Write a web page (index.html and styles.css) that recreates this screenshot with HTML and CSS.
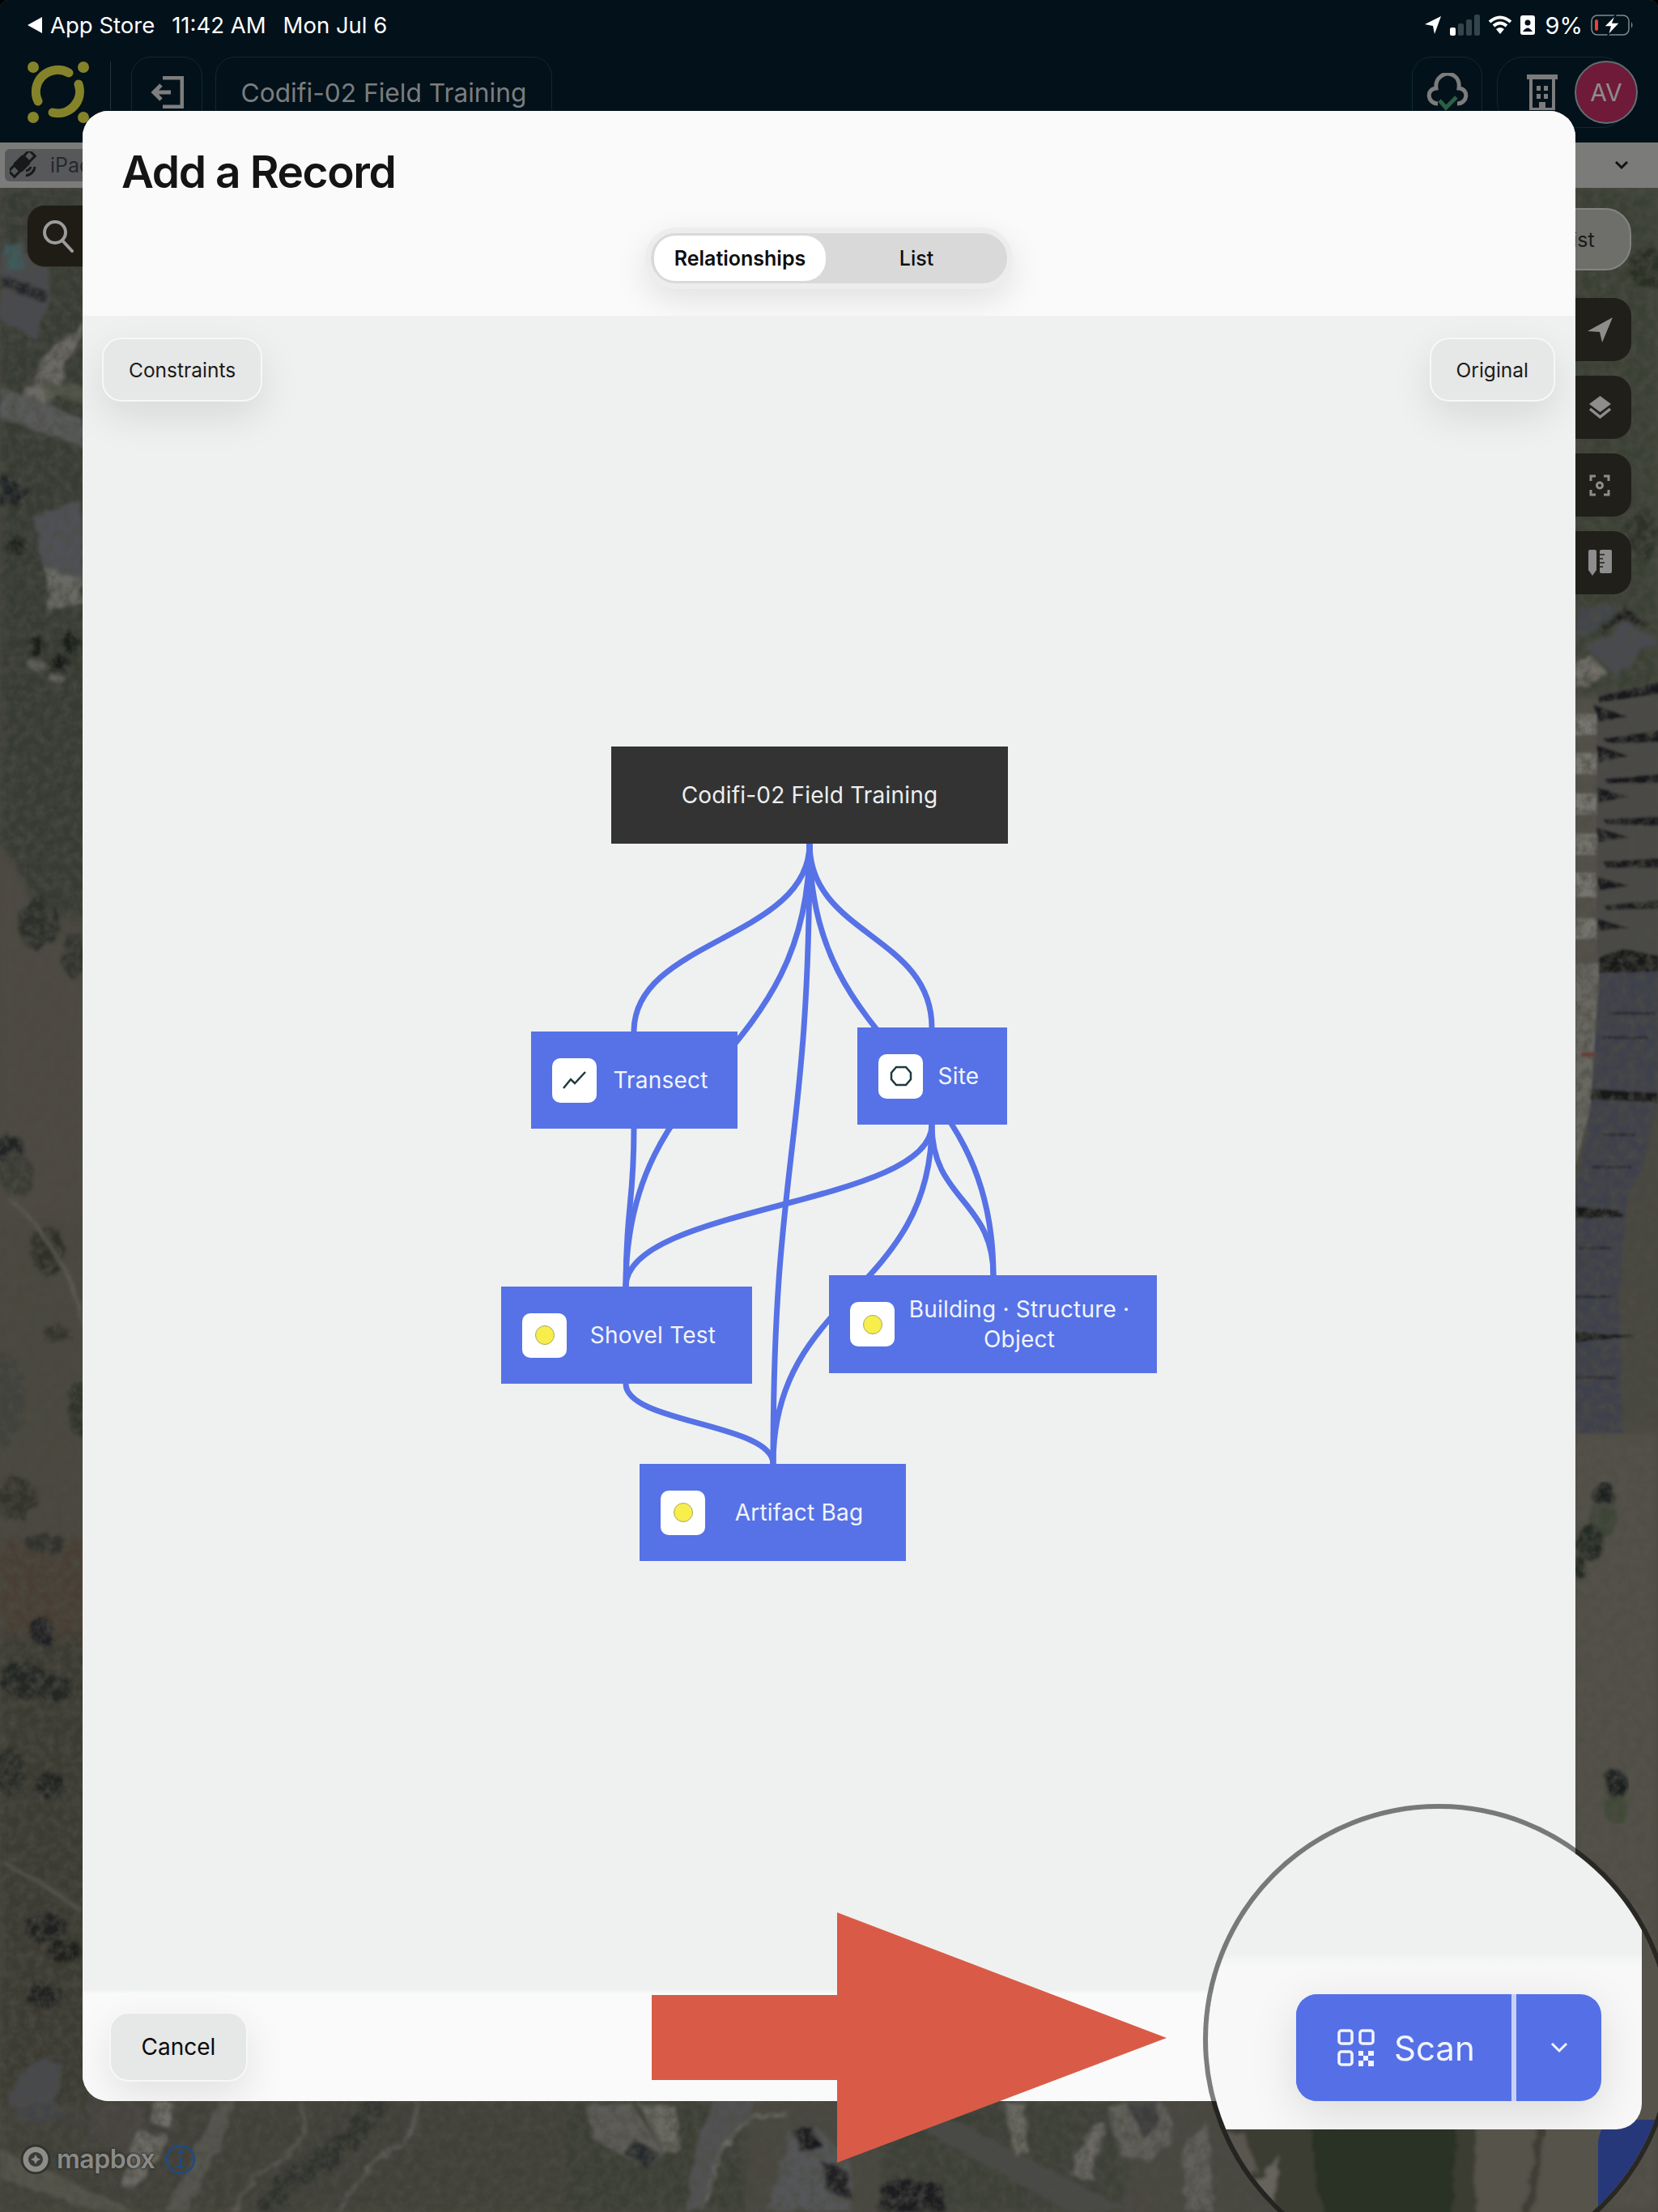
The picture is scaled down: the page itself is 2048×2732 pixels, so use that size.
FILE: index.html
```html
<!DOCTYPE html>
<html lang="en">

<head>
    <meta charset="UTF-8">
    <meta name="viewport" content="width=device-width, initial-scale=1.0">
    <title>Add a Record</title>
    <link rel="stylesheet" href="styles.css">
</head>

<body>
    <div class="screen">

        <!-- satellite map, only the edges around the dialog show -->
        <svg class="map" viewBox="0 0 2048 2732" aria-hidden="true">
            <defs>
                <filter id="soft"><feGaussianBlur stdDeviation="1.6" /></filter>
                <filter id="softer"><feGaussianBlur stdDeviation="6" /></filter>
                <filter id="sat" x="0" y="0" width="100%" height="100%">
                    <feTurbulence type="fractalNoise" baseFrequency="0.05" numOctaves="3" seed="4" result="n" />
                    <feDisplacementMap in="SourceGraphic" in2="n" scale="16" result="d" />
                    <feGaussianBlur in="d" stdDeviation="2.2" />
                </filter>
                <filter id="grain" x="0" y="0" width="100%" height="100%">
                    <feTurbulence type="fractalNoise" baseFrequency="0.09" numOctaves="4" seed="9" />
                    <feColorMatrix values="0 0 0 0 0.1  0 0 0 0 0.1  0 0 0 0 0.08  1.4 0 0 0 -0.45" />
                </filter>
            </defs>
            <rect width="2048" height="2732" fill="#55534a" />
            <g filter="url(#softer)">
                <rect x="0" y="232" width="110" height="900" fill="#40453a" />
                <polygon points="0,1040 110,1230 110,1500 0,1500" fill="#5a564d" />
                <rect x="0" y="1500" width="110" height="400" fill="#565249" />
                <rect x="0" y="1900" width="110" height="120" fill="#544a3e" />
                <rect x="0" y="2020" width="110" height="600" fill="#45443b" />
                <rect x="1940" y="232" width="108" height="640" fill="#454b3e" />
                <rect x="1940" y="1770" width="108" height="960" fill="#625e55" />
                <rect x="1940" y="860" width="108" height="340" fill="#625f57" />
                <rect x="0" y="2595" width="700" height="137" fill="#4c4c42" />
                <rect x="700" y="2595" width="220" height="137" fill="#44493e" />
                <rect x="1090" y="2595" width="300" height="137" fill="#474c40" />
            </g>
            <g filter="url(#sat)">
                <!-- left strip, top houses and street -->
                <polygon points="0,315 60,305 62,372 45,420 0,395" fill="#54575d" />
                <polygon points="8,305 28,298 28,330 8,335" fill="#4a6a6c" />
                <polygon points="0,340 60,360 56,372 0,355" fill="#2c2e32" />
                <polygon points="30,490 62,425 95,410 102,395 102,410 60,500" fill="#7e7c75" />
                <polygon points="0,479 102,517 102,551 0,517" fill="#686a6b" />
                <polygon points="55,470 102,478 102,497 54,482" fill="#5f6654" />
                <polygon points="0,585 36,605 25,625 0,625" fill="#24262c" />
                <polygon points="42,640 102,620 102,715 62,720 48,680" fill="#5b5f66" />
                <polygon points="55,700 102,715 102,745 62,760" fill="#7c7b75" />
                <ellipse cx="20" cy="675" rx="11" ry="14" fill="#272c24" />
                <ellipse cx="47" cy="800" rx="9" ry="13" fill="#1f211e" />
                <ellipse cx="72" cy="820" rx="11" ry="13" fill="#1f211e" />
                <ellipse cx="87" cy="795" rx="9" ry="12" fill="#1f211e" />
                <ellipse cx="46" cy="822" rx="11" ry="6" fill="#74746c" />
                <ellipse cx="70" cy="838" rx="11" ry="5" fill="#74746c" />
                <ellipse cx="48" cy="1140" rx="24" ry="34" fill="#363830" />
                <ellipse cx="92" cy="1180" rx="14" ry="30" fill="#3a3c35" />
                <ellipse cx="12" cy="1420" rx="20" ry="16" fill="#26292a" />
                <ellipse cx="20" cy="1450" rx="22" ry="26" fill="#45463e" />
                <ellipse cx="60" cy="1545" rx="20" ry="30" fill="#38392f" />
                <ellipse cx="70" cy="1648" rx="18" ry="10" fill="#3c3d36" />
                <ellipse cx="5" cy="1730" rx="26" ry="56" fill="#4b4e45" />
                <ellipse cx="98" cy="1740" rx="12" ry="36" fill="#383d32" />
                <path d="M10 1480 Q50 1510 80 1570 Q95 1600 102 1635" fill="none" stroke="#6f6c63" stroke-width="4" />
                <!-- left strip, trees and lower house -->
                <ellipse cx="20" cy="1850" rx="26" ry="26" fill="#3c3c36" />
                <ellipse cx="55" cy="1905" rx="25" ry="12" fill="#3a3a34" />
                <ellipse cx="52" cy="2015" rx="16" ry="16" fill="#26272a" />
                <ellipse cx="30" cy="2075" rx="30" ry="20" fill="#2b2d29" />
                <ellipse cx="68" cy="2085" rx="24" ry="16" fill="#2c2e29" />
                <ellipse cx="12" cy="2190" rx="20" ry="28" fill="#33352e" />
                <ellipse cx="62" cy="2205" rx="20" ry="16" fill="#272926" />
                <ellipse cx="55" cy="2380" rx="26" ry="18" fill="#262826" />
                <ellipse cx="80" cy="2410" rx="20" ry="16" fill="#252723" />
                <ellipse cx="55" cy="2465" rx="22" ry="15" fill="#262825" />
                <path d="M5 2300 Q60 2330 102 2360" fill="none" stroke="#66635a" stroke-width="5" />
                <polygon points="8,2585 50,2540 75,2545 74,2590 55,2615 12,2600" fill="#52545a" />
                <!-- bottom strip -->
                <polygon points="0,2655 0,2690 120,2732 170,2732" fill="#646459" />
                <polygon points="270,2595 295,2595 232,2732 205,2732" fill="#66665f" />
                <polygon points="112,2600 170,2595 185,2630 158,2660 110,2640" fill="#524f4b" />
                <polygon points="190,2595 212,2595 210,2630 190,2625" fill="#82827a" />
                <polygon points="170,2630 210,2640 170,2705 150,2700" fill="#7e7c74" />
                <path d="M470 2595 Q440 2640 400 2670 Q350 2690 325 2732" fill="none" stroke="#373b34" stroke-width="28" />
                <path d="M375 2600 Q385 2640 350 2665 Q310 2690 285 2732" fill="none" stroke="#6d6b62" stroke-width="4" />
                <path d="M515 2595 Q520 2640 480 2660 Q445 2680 420 2732" fill="none" stroke="#74716a" stroke-width="4" />
                <ellipse cx="50" cy="2610" rx="30" ry="12" fill="#4d4f53" />
                <polygon points="725,2600 780,2597 820,2660 800,2680 730,2640" fill="#6e6d67" />
                <polygon points="780,2640 815,2660 800,2680 770,2660" fill="#2e3034" />
                <polygon points="790,2600 835,2600 840,2655 820,2660" fill="#7d7b72" />
                <polygon points="880,2595 940,2595 890,2660 865,2732 845,2732 860,2650" fill="#606164" />
                <path d="M970 2608 Q915 2610 890 2660 Q875 2695 870 2732" fill="none" stroke="#7e7c74" stroke-width="4" />
                <polygon points="975,2630 1012,2630 1050,2670 1050,2732 950,2732" fill="#646568" />
                <polygon points="978,2632 1005,2628 1014,2650 990,2660" fill="#1c1e23" />
                <polygon points="1015,2670 1045,2680 1050,2715 1020,2705" fill="#25272c" />
                <polygon points="1090,2700 1115,2690 1165,2700 1170,2732 1085,2732" fill="#212328" />
                <polygon points="1130,2625 1170,2615 1400,2732 1320,2732" fill="#545552" />
                <polygon points="1240,2595 1265,2595 1270,2660 1252,2660" fill="#7c7a71" />
                <polygon points="1366,2600 1435,2597 1452,2625 1420,2670 1385,2665" fill="#72716b" />
                <polygon points="1395,2600 1432,2597 1430,2630 1410,2640" fill="#46474a" />
                <polygon points="1338,2640 1365,2620 1350,2690 1325,2690" fill="#7b7a73" />
                <polygon points="1460,2650 1490,2620 1500,2732 1465,2732" fill="#72716a" />
                <!-- right strip, grass and first house -->
                <ellipse cx="2035" cy="330" rx="22" ry="26" fill="#333829" />
                <ellipse cx="2030" cy="660" rx="16" ry="32" fill="#343a2e" />
                <polygon points="1946,760 1975,745 2000,750 1955,790 1946,800" fill="#4e5158" />
                <polygon points="1960,800 2010,770 2048,790 2000,835 1985,825" fill="#55575e" />
                <polygon points="1975,785 2005,748 2035,772 2000,770" fill="#202124" />
                <polygon points="1946,820 1965,810 1985,830 1946,850" fill="#85837a" />
            </g>
            <g filter="url(#soft)">
                <rect x="1946" y="882" width="26" height="26" fill="#8a8881" />
                <rect x="1946" y="930" width="28" height="26" fill="#8a8881" />
                <rect x="1946" y="980" width="28" height="26" fill="#8a8881" />
                <rect x="1946" y="1030" width="27" height="26" fill="#8a8881" />
                <rect x="1946" y="1078" width="26" height="30" fill="#8a8881" />
                <rect x="1946" y="1134" width="26" height="26" fill="#8a8881" />
                <polygon points="1972,868 2048,850 2048,1180 1972,1180" fill="#565552" />
                <polygon points="1975,860 2050,843 2050,857 1975,868" fill="#1c1d21" />
                <polygon points="1968,870 2010,885 1975,892" fill="#1e1f23" />
                <polygon points="1980,912 2050,902 2050,917 1985,918" fill="#1c1d21" />
                <polygon points="1972,920 2012,934 1975,942" fill="#1e1f23" />
                <polygon points="1982,962 2050,956 2050,967 1985,968" fill="#1c1d21" />
                <polygon points="1972,972 2012,984 1975,992" fill="#1e1f23" />
                <polygon points="1980,1012 2050,1008 2050,1020 1985,1018" fill="#1c1d21" />
                <polygon points="1972,1022 2012,1034 1975,1040" fill="#1e1f23" />
                <polygon points="1980,1064 2050,1060 2050,1072 1985,1072" fill="#1c1d21" />
                <polygon points="1972,1082 2012,1094 1975,1100" fill="#1e1f23" />
                <polygon points="1980,1118 2050,1112 2050,1122 1985,1124" fill="#1c1d21" />
                <polygon points="1972,1134 2012,1146 1975,1150" fill="#1e1f23" />
                <polygon points="1946,1190 1976,1190 1972,1340 1946,1440" fill="#7a7972" />
                <polygon points="1976,1190 2048,1190 2048,1355 2030,1440 2010,1480 2000,1600 2005,1770 1946,1770 1946,1480 1965,1360" fill="#484c58" />
                <polygon points="1975,1182 2005,1172 2048,1180 2048,1200 1975,1202" fill="#1a1b1e" />
                <polygon points="1966,1345 2048,1350 2048,1362 1964,1358" fill="#1c1c1f" />
                <polygon points="1946,1490 2000,1495 2006,1503 1946,1505" fill="#1b1c1f" />
                <polygon points="1946,1645 2020,1650 1946,1658" fill="#1b1c1f" />
                <rect x="1985" y="1250" width="60" height="3" fill="#2a2b31" />
                <rect x="1980" y="1280" width="55" height="3" fill="#2a2b31" />
                <rect x="1980" y="1400" width="40" height="3" fill="#2a2b31" />
                <rect x="1965" y="1440" width="50" height="3" fill="#2a2b31" />
                <rect x="1950" y="1540" width="40" height="3" fill="#2a2b31" />
                <rect x="1946" y="1600" width="45" height="3" fill="#2a2b31" />
                <rect x="1946" y="1700" width="50" height="3" fill="#2a2b31" />
                <rect x="1953" y="1300" width="18" height="5" fill="#8a3a32" />
            </g>
            <g filter="url(#sat)">
                <ellipse cx="1980" cy="1845" rx="14" ry="15" fill="#1f2122" />
                <ellipse cx="1980" cy="1875" rx="18" ry="20" fill="#465140" />
                <ellipse cx="1965" cy="1905" rx="16" ry="22" fill="#2c3229" />
                <ellipse cx="1950" cy="1935" rx="8" ry="14" fill="#2c3229" />
                <ellipse cx="1997" cy="2205" rx="14" ry="18" fill="#1f2122" />
                <ellipse cx="1997" cy="2235" rx="15" ry="18" fill="#4c563f" />
            </g>
            <rect width="2048" height="2732" filter="url(#grain)" />
            <rect width="2048" height="2732" fill="#000" opacity="0.14" />
        </svg>

        <div class="status-bar">
            <div class="status-left">
                <span class="back-triangle"></span>
                <span class="status-app">App Store</span>
                <span class="status-time">11:42 AM</span>
                <span>Mon Jul 6</span>
            </div>
            <div class="status-right">
                <svg width="22" height="24" viewBox="0 0 22 24"><path d="M21 1 L1 11 L11 13 L13 23 Z" fill="#fff" /></svg>
                <svg width="37" height="26" viewBox="0 0 37 26">
                    <rect x="0" y="16" width="7" height="10" rx="2" fill="#fff" />
                    <rect x="10" y="11" width="7" height="15" rx="2" fill="#33454a" />
                    <rect x="20" y="6" width="7" height="20" rx="2" fill="#33454a" />
                    <rect x="30" y="0" width="7" height="26" rx="2" fill="#33454a" />
                </svg>
                <svg width="30" height="24" viewBox="0 0 30 24">
                    <path d="M2 8 Q15 -3 28 8" fill="none" stroke="#fff" stroke-width="4" />
                    <path d="M7 13 Q15 6 23 13" fill="none" stroke="#fff" stroke-width="4" />
                    <path d="M15 23 L10 17 Q15 13 20 17 Z" fill="#fff" />
                </svg>
                <svg width="18" height="24" viewBox="0 0 18 24">
                    <rect width="18" height="24" rx="3" fill="#fff" />
                    <circle cx="9" cy="9" r="3.5" fill="#03111a" />
                    <path d="M3 20 Q9 11 15 20 Z" fill="#03111a" />
                </svg>
                <span class="battery-pct">9%</span>
                <svg width="54" height="26" viewBox="0 0 54 26">
                    <rect x="1" y="1" width="46" height="24" rx="7" fill="none" stroke="#7f8c8e" stroke-width="1.5" />
                    <rect x="5" y="6" width="4" height="14" rx="2" fill="#e8433a" />
                    <path d="M50 9 Q53 13 50 17 Z" fill="#7f8c8e" />
                    <path d="M31 0 L16 15 L24 15 L21 26 L36 10 L27 10 Z" fill="#fff" stroke="#03111a" stroke-width="1.5" />
                </svg>
            </div>
        </div>

        <div class="app-bar">
            <svg class="logo" width="78" height="78" viewBox="0 0 78 78">
                <g fill="#84832a">
                    <circle cx="8" cy="8" r="7" />
                    <circle cx="70" cy="8" r="7" />
                    <circle cx="8" cy="70" r="7" />
                    <circle cx="70" cy="70" r="7" />
                </g>
                <g fill="none" stroke="#84832a" stroke-width="11" stroke-linecap="round">
                    <path d="M52 15 A27 27 0 0 0 14 50" />
                    <path d="M64 29 A27 27 0 0 1 32 64" />
                </g>
            </svg>
            <div class="bar-divider"></div>
            <div class="bar-box back-box">
                <svg width="42" height="40" viewBox="0 0 42 40" fill="none" stroke="#7e7e7e" stroke-width="5">
                    <path d="M16 2 H40 V38 H16" />
                    <path d="M26 20 H6 M14 11 L5 20 L14 29" />
                </svg>
            </div>
            <div class="bar-box project-box">Codifi-02 Field Training</div>
            <div class="bar-spacer"></div>
            <div class="bar-box cloud-box">
                <svg width="52" height="48" viewBox="0 0 52 48" fill="none">
                    <path d="M14 38 C1 38 -1 20 12 19 C10 4 24 1 26 1 C30 1 42 4 40 19 C53 20 51 38 38 38" stroke="#7c7c7c" stroke-width="5" />
                    <path d="M16 34 L24 43 L37 30" stroke="#2a6044" stroke-width="5" />
                </svg>
            </div>
            <div class="bar-box org-box">
                <svg width="38" height="44" viewBox="0 0 38 44" fill="none">
                    <path d="M0 3 H38" stroke="#7c7c7c" stroke-width="6" />
                    <path d="M5 6 V43 H33 V6" stroke="#7c7c7c" stroke-width="4" />
                    <g fill="#7c7c7c">
                        <rect x="12" y="14" width="5" height="6" />
                        <rect x="21" y="14" width="5" height="6" />
                        <rect x="12" y="24" width="5" height="6" />
                        <rect x="21" y="24" width="5" height="6" />
                        <rect x="15" y="34" width="8" height="9" />
                    </g>
                </svg>
            </div>
        </div>
        <div class="avatar">AV</div>

        <div class="gps-bar">
            <div class="gps-tag">
                <svg width="34" height="34" viewBox="0 0 34 34" fill="none" stroke="#17191b" stroke-width="3">
                    <g transform="rotate(-45 15 15)">
                        <rect x="-3" y="10" width="10" height="10" />
                        <rect x="23" y="10" width="10" height="10" />
                        <rect x="9" y="9" width="12" height="12" fill="#17191b" />
                    </g>
                    <path d="M20 30 Q30 28 31 19 M20 24 Q25 23 26 19" />
                </svg>
                <span>iPad</span>
            </div>
            <svg class="gps-chevron" width="18" height="12" viewBox="0 0 18 12" fill="none" stroke="#111" stroke-width="3"><path d="M2 2 L9 9 L16 2" /></svg>
        </div>

        <!-- floating map controls, mostly behind the dialog -->
        <button class="map-search">
            <svg width="40" height="41" viewBox="0 0 40 41" fill="none" stroke="#9c9c9c" stroke-width="4">
                <circle cx="16" cy="16" r="13" />
                <path d="M25 26 L37 39" stroke-linecap="round" />
            </svg>
        </button>
        <div class="map-list">List</div>
        <div class="map-tools">
            <div class="tool"><svg width="31" height="31" viewBox="0 0 31 31"><path d="M31 0 L0 17 L15 18 L18 31 Z" fill="#8d8d8d" /></svg></div>
            <div class="tool">
                <svg width="27" height="29" viewBox="0 0 27 29">
                    <path d="M13.500 0 L27 10 L13.500 20 L0 10 Z" fill="#8d8d8d" />
                    <path d="M1 16 L13.500 26 L26 16" fill="none" stroke="#8d8d8d" stroke-width="3.500" />
                </svg>
            </div>
            <div class="tool">
                <svg width="26" height="27" viewBox="0 0 26 27" fill="none" stroke="#8d8d8d" stroke-width="3">
                    <path d="M8 2 H2 V8 M18 2 H24 V8 M8 25 H2 V19 M18 25 H24 V19" />
                    <circle cx="13" cy="13.500" r="3.500" />
                </svg>
            </div>
            <div class="tool">
                <svg width="29" height="32" viewBox="0 0 29 32">
                    <path d="M0 2 Q0 0 2 0 H8 Q10 0 10 2 V25 L5 32 L0 25 Z" fill="#8d8d8d" />
                    <rect x="14" y="0" width="15" height="29" rx="2" fill="#8d8d8d" />
                    <path d="M14 6 H20 M14 11 H18 M14 16 H20 M14 21 H18" stroke="#201f19" stroke-width="1.500" />
                </svg>
            </div>
        </div>

        <div class="mapbox">
            <svg width="38" height="38" viewBox="0 0 38 38">
                <circle cx="19" cy="19" r="17" fill="#8c8c88" stroke="#33332e" stroke-width="3" />
                <circle cx="19" cy="19" r="9" fill="#3a3a36" />
                <path d="M19 13 L21 17 L25 19 L21 21 L19 25 L17 21 L13 19 L17 17 Z" fill="#8c8c88" />
            </svg>
            <span>mapbox</span>
            <svg class="mapbox-info" width="38" height="38" viewBox="0 0 38 38" fill="none" stroke="#1c4a8a" stroke-width="2.500">
                <circle cx="19" cy="19" r="17" />
                <path d="M19 16 V28 M15 28 H23" />
                <circle cx="19" cy="10" r="1.500" fill="#1c4a8a" />
            </svg>
        </div>

        <div class="modal">
            <div class="modal-header">
                <h1 class="modal-title">Add a Record</h1>
                <div class="segmented">
                    <div class="segment segment-active">Relationships</div>
                    <div class="segment">List</div>
                </div>
            </div>

            <div class="modal-body">
                <div class="graph-actions">
                    <button class="soft-button">Constraints</button>
                    <button class="soft-button">Original</button>
                </div>

                <div class="graph">
                    <!-- viewBox keeps page coordinates for the edges -->
                    <svg class="graph-edges" viewBox="102 390 1844 2068">
                        <g fill="none" stroke="#5672e6" stroke-width="7">
                            <path d="M1000 1042 C1000 1160 783 1160 783 1274" />
                            <path d="M1000 1042 C1000 1315 773 1315 773 1589" />
                            <path d="M1000 1042 C1000 1425 955 1425 955 1808" />
                            <path d="M1000 1042 C1000 1308 1227 1308 1227 1575" />
                            <path d="M1000 1042 C1000 1155 1151 1155 1151 1269" />
                            <path d="M783 1394 C783 1490 773 1490 773 1589" />
                            <path d="M1151 1389 C1151 1489 773 1489 773 1589" />
                            <path d="M1151 1389 C1151 1482 1227 1482 1227 1575" />
                            <path d="M1151 1389 C1151 1598 955 1598 955 1808" />
                            <path d="M773 1709 C773 1758 955 1758 955 1808" />
                        </g>
                    </svg>

                    <div class="node node-root">Codifi-02 Field Training</div>

                    <div class="node node-transect">
                        <span class="node-icon">
                            <svg width="30" height="24" viewBox="0 0 30 24" fill="none" stroke="#1f3a3d" stroke-width="2.500"><path d="M1 22 L10 11 L15 16 L28 2" /></svg>
                        </span>
                        <span class="node-label">Transect</span>
                    </div>
                    <div class="node node-site">
                        <span class="node-icon">
                            <svg width="28" height="26" viewBox="0 0 28 26" fill="none" stroke="#1f3a3d" stroke-width="2.500"><path d="M8 2 H20 L26 9 V17 L20 24 H8 L2 17 V9 Z" /></svg>
                        </span>
                        <span class="node-label">Site</span>
                    </div>
                    <div class="node node-shovel">
                        <span class="node-icon"><span class="dot"></span></span>
                        <span class="node-label">Shovel Test</span>
                    </div>
                    <div class="node node-building">
                        <span class="node-icon"><span class="dot"></span></span>
                        <span class="node-label">Building · Structure · Object</span>
                    </div>
                    <div class="node node-artifact">
                        <span class="node-icon"><span class="dot"></span></span>
                        <span class="node-label">Artifact Bag</span>
                    </div>
                </div>
            </div>

            <div class="modal-footer">
                <button class="soft-button cancel-button">Cancel</button>
            </div>
        </div>

        <svg class="red-arrow" width="636" height="309" viewBox="0 0 636 309">
            <polygon points="0,102 229,102 229,0 636,155 229,309 229,207 0,207" fill="#d95b47" />
        </svg>

        <!-- enlarged view of the split button -->
        <div class="magnifier">
            <svg class="magnifier-map" viewBox="1492 2234 570 570">
                <rect x="1492" y="2234" width="570" height="570" fill="#56534a" />
                <g filter="url(#sat)">
                    <rect x="1492" y="2610" width="330" height="194" fill="#3a3d33" />
                    <polygon points="1620,2625 1800,2625 1790,2804 1640,2804" fill="#2c3028" />
                    <polygon points="1492,2630 1535,2632 1555,2680 1520,2720 1492,2700" fill="#5a5750" />
                    <polygon points="1545,2700 1580,2660 1570,2760 1540,2760" fill="#66645c" />
                    <polygon points="1900,2625 1910,2625 1880,2804 1870,2804" fill="#3e3c36" />
                </g>
                <path d="M1974 2804 V2650 Q1974 2618 2006 2618 H2062 V2804 Z" fill="#27387a" />
            </svg>
            <div class="magnifier-panel">
                <div class="magnifier-body"></div>
                <div class="magnifier-footer">
                    <div class="scan-button">
                        <div class="scan-main">
                            <svg width="46" height="46" viewBox="0 0 46 46" fill="none" stroke="#f2f4ff" stroke-width="3.500">
                                <rect x="2" y="2" width="16" height="16" rx="3" />
                                <rect x="28" y="2" width="16" height="16" rx="3" />
                                <rect x="2" y="28" width="16" height="16" rx="3" />
                                <g fill="#f2f4ff" stroke="none">
                                    <rect x="26" y="27" width="6" height="6" />
                                    <rect x="38" y="27" width="7" height="6" />
                                    <rect x="32" y="33" width="6" height="6" />
                                    <rect x="26" y="39" width="6" height="7" />
                                    <rect x="38" y="39" width="7" height="7" />
                                </g>
                            </svg>
                            <span>Scan</span>
                        </div>
                        <div class="scan-more">
                            <svg width="22" height="14" viewBox="0 0 22 14" fill="none" stroke="#f2f4ff" stroke-width="3"><path d="M2 2 L11 11 L20 2" /></svg>
                        </div>
                    </div>
                </div>
            </div>
        </div>
    </div>
</body>

</html>
```

FILE: styles.css
```css
html {
    margin: 0;
    background-color: #000;
}

body {
    margin: 0;
    font-family: Inter, "Liberation Sans", sans-serif;
}

button {
    font-family: inherit;
}

.screen {
    position: relative;
    width: 2048px;
    height: 2732px;
    overflow: hidden;
    border-radius: 10px 10px 0 0;
    display: flex;
    flex-direction: column;
}

.map {
    position: absolute;
    left: 0;
    top: 0;
    width: 2048px;
    height: 2732px;
}

/* status bar */

.status-bar {
    position: relative;
    height: 62px;
    padding: 0 29px 0 34px;
    display: flex;
    justify-content: space-between;
    align-items: center;
    color: #fff;
    font-size: 27.5px;
    background-color: #03111a;
}

.status-left {
    display: flex;
    align-items: center;
    gap: 21px;
}

.back-triangle {
    width: 0;
    height: 0;
    margin-right: -11px;
    border-top: 10px solid transparent;
    border-bottom: 10px solid transparent;
    border-right: 18px solid #fff;
}

.status-right {
    display: flex;
    align-items: center;
    gap: 10px;
}

.battery-pct {
    font-size: 29px;
    margin-left: 3px;
}

/* app bar */

.app-bar {
    position: relative;
    height: 114px;
    padding: 8px 38px 0 33px;
    box-sizing: border-box;
    display: flex;
    align-items: flex-start;
    background-color: #03111a;
}

.logo {
    margin-top: 5px;
}

.bar-divider {
    width: 1px;
    height: 60px;
    margin: 6px 25px 0 25px;
    background-color: #27343a;
}

.bar-box {
    height: 88px;
    box-sizing: border-box;
    display: flex;
    align-items: center;
    justify-content: center;
    border: 1px solid #0e2a30;
    border-radius: 24px;
}

.back-box {
    width: 88px;
    margin-right: 16px;
}

.project-box {
    width: 416px;
    font-size: 31.7px;
    color: #7b7d7e;
}

.bar-spacer {
    flex: 1;
}

.cloud-box {
    width: 87px;
    margin-right: 18px;
}

.org-box {
    width: 161px;
    justify-content: flex-start;
    padding-left: 36px;
    border-radius: 32px;
}

.avatar {
    position: absolute;
    left: 1945px;
    top: 75px;
    width: 78px;
    height: 78px;
    box-sizing: border-box;
    border: 2px solid #5f6f72;
    border-radius: 50%;
    display: flex;
    align-items: center;
    justify-content: center;
    color: #8d8d8d;
    font-size: 30px;
    background-color: #6f1a38;
    z-index: 3;
}

/* gps strip under the app bar */

.gps-bar {
    position: relative;
    height: 56px;
    padding: 0 36px 0 6px;
    display: flex;
    align-items: center;
    justify-content: space-between;
    background-color: #7b7c7a;
}

.gps-tag {
    width: 200px;
    height: 40px;
    padding-left: 6px;
    display: flex;
    align-items: center;
    gap: 16px;
    border-radius: 6px;
    color: #26282a;
    font-size: 25px;
    background-color: #56585a;
}

/* map controls */

.map-search {
    position: absolute;
    left: 33px;
    top: 253px;
    width: 120px;
    height: 77px;
    padding: 0 0 0 18px;
    display: flex;
    align-items: center;
    border: 1px solid #3a3a2c;
    border-radius: 22px;
    background-color: #1e1c15;
}

.map-list {
    position: absolute;
    left: 1880px;
    top: 257px;
    width: 135px;
    height: 77px;
    box-sizing: border-box;
    padding-left: 46px;
    display: flex;
    align-items: center;
    border: 2px solid #83837f;
    border-radius: 32px;
    color: #1b1b1b;
    font-size: 25px;
    background-color: #6e6e6a;
}

.map-tools {
    position: absolute;
    left: 1900px;
    top: 368px;
    width: 115px;
    display: flex;
    flex-direction: column;
    gap: 18px;
}

.tool {
    height: 78px;
    padding-left: 37px;
    box-sizing: border-box;
    display: flex;
    align-items: center;
    justify-content: center;
    border-radius: 22px;
    background-color: #201f19;
}

.mapbox {
    position: absolute;
    left: 25px;
    top: 2647px;
    display: flex;
    align-items: center;
    gap: 7px;
    color: #8a8a86;
    font-size: 32px;
    font-weight: 600;
    letter-spacing: -0.5px;
    text-shadow: 0 0 3px #2a2a26, 0 0 3px #2a2a26;
}

.mapbox-info {
    margin-left: 6px;
}

/* dialog */

.modal {
    position: absolute;
    left: 102px;
    top: 137px;
    width: 1844px;
    height: 2458px;
    display: flex;
    flex-direction: column;
    overflow: hidden;
    border-radius: 32px;
    background-color: #fafafa;
}

.modal-header {
    height: 253px;
    flex-shrink: 0;
    position: relative;
    box-sizing: border-box;
    padding-top: 144px;
    display: flex;
    justify-content: center;
    background-color: #fafafa;
}

.modal-title {
    position: absolute;
    left: 48px;
    top: 42px;
    margin: 0;
    color: #141414;
    font-size: 55px;
    font-weight: 600;
    letter-spacing: -1.4px;
}

.segmented {
    height: 76px;
    width: 454px;
    box-sizing: border-box;
    padding: 4px;
    display: flex;
    align-items: center;
    border: 7px solid #ededed;
    border-radius: 38px;
    background-color: #d9d9d9;
    box-shadow: 0 14px 40px rgba(0, 0, 0, 0.1);
}

.segment {
    flex: 1;
    padding-left: 4px;
    text-align: center;
    color: #0e0e0e;
    font-size: 25px;
    font-weight: 500;
}

.segment-active {
    flex: 0 0 212px;
    height: 56px;
    padding-left: 0;
    line-height: 56px;
    font-weight: 600;
    border-radius: 26px;
    background-color: #fff;
}

.modal-body {
    flex: 1;
    position: relative;
    background-color: #eff1f0;
}

.graph-actions {
    position: relative;
    z-index: 2;
    padding: 27px 25px 0 24px;
    display: flex;
    justify-content: space-between;
}

.soft-button {
    height: 79px;
    padding: 0 31px;
    border: 2px solid #f6f7f7;
    border-radius: 24px;
    color: #1a1a1a;
    font-size: 24.5px;
    background-color: #e6e7e7;
    box-shadow: 0 18px 50px rgba(0, 0, 0, 0.1);
}

.graph {
    position: absolute;
    left: 0;
    top: 0;
    width: 1844px;
    height: 2068px;
}

.graph-edges {
    position: absolute;
    left: 0;
    top: 0;
    width: 1844px;
    height: 2068px;
}

.node {
    position: absolute;
    height: 120px;
    box-sizing: border-box;
    padding: 0 16px 0 26px;
    display: flex;
    align-items: center;
    color: #f2f4ff;
    font-size: 28px;
    line-height: 37px;
    letter-spacing: 0.2px;
    background-color: #5672e6;
}

.node-root {
    left: 653px;
    top: 532px;
    width: 490px;
    padding: 0;
    justify-content: center;
    color: #eeeeee;
    background-color: #333333;
}

.node-transect {
    left: 554px;
    top: 884px;
    width: 255px;
}

.node-site {
    left: 957px;
    top: 879px;
    width: 185px;
}

.node-shovel {
    left: 517px;
    top: 1199px;
    width: 310px;
}

.node-building {
    left: 922px;
    top: 1185px;
    width: 405px;
    height: 121px;
}

.node-artifact {
    left: 688px;
    top: 1418px;
    width: 329px;
}

.node-icon {
    width: 55px;
    height: 55px;
    flex-shrink: 0;
    display: flex;
    align-items: center;
    justify-content: center;
    border-radius: 10px;
    background-color: #fff;
}

.node-label {
    flex: 1;
    text-align: center;
}

.dot {
    width: 24px;
    height: 24px;
    box-sizing: border-box;
    border: 1px solid #a9a566;
    border-radius: 50%;
    background-color: #f7ee4c;
}

.modal-footer {
    height: 137px;
    flex-shrink: 0;
    box-sizing: border-box;
    padding: 24px 0 0 33px;
    border-top: 3px solid #f4f5f5;
    background-color: #fafafa;
}

.cancel-button {
    width: 171px;
    height: 86px;
    padding: 0;
    color: #0a0a0a;
    font-size: 28px;
}

/* annotations on top of the screenshot */

.red-arrow {
    position: absolute;
    left: 805px;
    top: 2362px;
}

.magnifier {
    position: absolute;
    left: 1486px;
    top: 2228px;
    width: 582px;
    height: 582px;
    box-sizing: border-box;
    overflow: hidden;
    border: 6px solid rgba(0, 0, 0, 0.5);
    border-radius: 50%;
    background-clip: padding-box;
}

.magnifier-map {
    position: absolute;
    left: 0;
    top: 0;
    width: 570px;
    height: 570px;
}

.magnifier-panel {
    position: absolute;
    left: 0;
    top: 0;
    width: 536px;
    height: 396px;
    display: flex;
    flex-direction: column;
    overflow: hidden;
    border-radius: 0 0 32px 0;
}

.magnifier-body {
    height: 181px;
    background-color: #eff1f0;
}

.magnifier-footer {
    flex: 1;
    padding: 48px 0 0 109px;
    background: linear-gradient(#f1f2f2, #f8f8f8 14px);
}

.scan-button {
    width: 377px;
    height: 132px;
    display: flex;
    overflow: hidden;
    color: #f2f4ff;
    border-radius: 26px;
    background-color: #5570e6;
    box-shadow: 0 16px 60px rgba(0, 0, 0, 0.12);
    filter: blur(0.7px);
}

.scan-main {
    width: 266px;
    padding: 0 0 0 51px;
    box-sizing: border-box;
    display: flex;
    align-items: center;
    gap: 24px;
    font-size: 42px;
    background-color: #5570e6;
}

.scan-more {
    flex: 1;
    display: flex;
    align-items: center;
    justify-content: center;
    border-left: 6px solid #c8d1f5;
}
```
